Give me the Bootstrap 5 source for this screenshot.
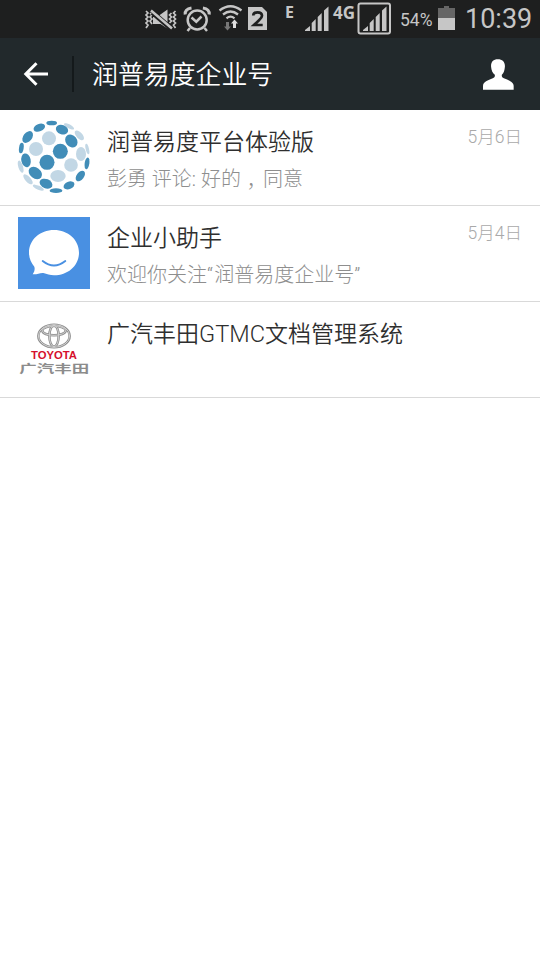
<!DOCTYPE html>
<html lang="zh-CN">
<head>
<meta charset="utf-8">
<meta name="viewport" content="width=device-width, initial-scale=1">
<title>润普易度企业号</title>
<link rel="stylesheet" href="https://cdn.jsdelivr.net/npm/bootstrap@5.3.0/dist/css/bootstrap.min.css">
<style>
body{font-family:Roboto,"Noto Sans CJK SC",sans-serif;background:#fff;height:960px;overflow:hidden}
svg{display:block;flex:none;overflow:visible}
.status{height:38px;background:#1e1f1f;color:#c6c6c6;padding-left:145px}
.status span{flex:none;white-space:nowrap;line-height:38px}
.s-alarm{margin-left:6px}.s-wifi{margin-left:8px}.s-sim{margin-left:4px}
.s-edge{width:20px;margin-left:17px;font:700 16px "Open Sans",sans-serif}
.status .s-edge,.status .s-lte{line-height:25px;height:38px}
.s-lte{width:24px;margin-left:4px;font:700 17px "Open Sans",sans-serif}
.s-pct{width:38px;margin-left:9px;font-size:17.5px;padding-top:1px}
.s-clock{margin-left:10px;font-size:27px}
.topbar{height:72px;background:#22292c;color:#fff;padding:0 26px 0 24px}
.topbar .rule{width:2px;height:36px;background:#14191b;margin-left:24px}
.topbar h1{font-size:25.9px;font-weight:350;line-height:72px;margin-left:18px;padding-top:2px}
.chat{height:96px;padding:11px 18px 0 18px;border-bottom:1px solid #d9d9d9}
.chat-body{padding-left:17px}
.chat-name{font-size:23px;line-height:30px;color:#2f2f2f;margin-top:7px;font-weight:350}
.latin{font-size:23.6px;line-height:1}
.chat-text{font-size:20px;line-height:28px;color:#8e8e8e;margin-top:7px;font-weight:300}
.chat-date{font-size:17.5px;line-height:24px;color:#a9a9a9;margin-top:4px;font-weight:300}
.comma{display:inline-block;width:22px;height:20px;line-height:20px;margin-bottom:-4px;vertical-align:-8px;font-family:"Noto Sans CJK TC",sans-serif}
.quote{letter-spacing:1.3px}
.brand-en{font:700 33px "Liberation Sans",Arial,sans-serif;fill:#d5112d}
.brand-cn{font:700 34px "Noto Sans CJK SC",sans-serif;fill:#8c8c8c}
</style>
<script src="https://cdn.jsdelivr.net/npm/bootstrap@5.3.0/dist/js/bootstrap.bundle.min.js"></script>
</head>
<body>
<div class="status d-flex">
  <svg width="33" height="38" viewBox="145 0 33 38" fill="none" stroke="#c6c6c6" stroke-width="1.700"><path d="M146 11l2 2-2 2 2 2-2 2 2 2-2 2 2 2-2 3M175.500 11l-2 2 2 2-2 2 2 2-2 2 2 2-2 2 2 3M150 13l2 2-2 2 2 2-2 2 2 3M171.500 13l-2 2 2 2-2 2 2 2-2 2"/><path d="M159 15.500l8.500-6v14zM153 17h3l11.500 9v2.500l-7-4.500h-7.500z" fill="#c6c6c6" stroke="none"/><path d="M152.500 12.500l18 15.500" stroke="#1e1f1f" stroke-width="5"/><path d="M151 10.500l21 18" stroke-width="2.500"/></svg>
  <svg class="s-alarm" width="27" height="38" viewBox="184 0 27 38" fill="none" stroke="#c6c6c6" stroke-width="2.500"><circle cx="197.200" cy="20" r="9.500"/><path d="M191.500 17.500l4.800 4.200 5.200-5.200M190 28l-2.500 3M204.500 28l2.500 3"/><path d="M185.200 14.500q-.5-5.500 6.300-6.500M209.200 14.500q.5-5.500-6.300-6.500" stroke-width="3"/></svg>
  <svg class="s-wifi" width="25" height="38" viewBox="219 0 25 38" fill="none" stroke="#c6c6c6" stroke-width="2.300"><path d="M219.500 10.500q11-8.500 22 0M223 14.500q7.500-6 15 0M226.500 18.300q4-3.300 8 0"/><path d="M234.500 19.500l3.500 4h-2v4.500h-3v-4.500h-2z" fill="#ddd" stroke="none"/><path d="M226 22h3v4.500h2l-3.500 4-3.500-4h2z" fill="#777" stroke="none"/></svg>
  <svg class="s-sim" width="20" height="38" viewBox="248 0 20 38"><path d="M248 7h14l5 5v18h-19z" fill="#c6c6c6"/><path d="M253.300 15.500q0-3.200 4.200-3.200 4.500 0 4.500 3.400 0 2-3 4.600l-5 4.700h8.700" fill="none" stroke="#1e1f1f" stroke-width="2.700"/></svg>
  <span class="s-edge">E</span>
  <svg width="24" height="38" viewBox="305 0 24 38" fill="#c6c6c6"><path d="M305 31v-1l5-4v5zM311.700 31v-8l4-4v12zM317.700 31V17l4-4v18zM324 31V10.500l4.500-4V31z"/></svg>
  <span class="s-lte">4G</span>
  <svg width="34" height="38" viewBox="357 0 34 38" fill="#c6c6c6"><rect x="358.500" y="3.500" width="31.500" height="30" rx="2" fill="none" stroke="#c6c6c6" stroke-width="2"/><path d="M363 31v-1l5-4v5zM369.700 31v-8l4-4v12zM375.700 31V17l4-4v18zM382 31V10.500l4.500-4V31z"/></svg>
  <span class="s-pct">54%</span>
  <svg width="17" height="38" viewBox="438 0 17 38"><path d="M444 6h5v2h6v11h-17V8h6z" fill="#666"/><path d="M438 18h17v12h-17z" fill="#c6c6c6"/></svg>
  <span class="s-clock">10:39</span>
</div>
<header class="topbar d-flex align-items-center">
  <svg width="24" height="24" viewBox="24 62.500 24 24" fill="none" stroke="#fff" stroke-width="3"><path d="M48 74.500H26M36.500 63.700L25.800 74.500l10.700 10.800"/></svg>
  <div class="rule"></div>
  <h1 class="mb-0">润普易度企业号</h1>
  <svg class="ms-auto" width="31" height="31" viewBox="69 68 92 92" fill="#fff"><path d="M113 69c-14 0-21 9-20 22 1 11 4 18 11 24 1 6-1 8-6 10-14 6-29 11-29 23v11h91v-11c0-12-15-17-29-23-5-2-7-4-6-10 6-6 8-13 9-24 1-13-7-22-21-22z"/></svg>
</header>
<main>
  <div class="chat d-flex">
    <svg width="72" height="72" viewBox="24 27 216 216"><g fill="#c2d7e5"><circle cx="117" cy="79" r="21"/><circle cx="78" cy="111" r="21"/><circle cx="183" cy="159" r="20.500"/><ellipse cx="144" cy="192" rx="23" ry="18"/><ellipse cx="213" cy="126" rx="15" ry="21"/><ellipse cx="208" cy="70" rx="9" ry="18" transform="rotate(-43 208 70)"/><ellipse cx="177" cy="43" rx="17" ry="6" transform="rotate(28 177 43)"/><ellipse cx="232" cy="111" rx="5" ry="16" transform="rotate(-13 232 111)"/><ellipse cx="32" cy="164" rx="7" ry="19" transform="rotate(-18 32 164)"/><ellipse cx="54" cy="202" rx="8" ry="19" transform="rotate(-43 54 202)"/><ellipse cx="85" cy="227" rx="18" ry="6" transform="rotate(24 85 227)"/></g><g fill="#418db8"><circle cx="151" cy="118" r="22.500"/><circle cx="111" cy="151" r="22.500"/><ellipse cx="184" cy="87" rx="17" ry="21" transform="rotate(-38 184 87)"/><ellipse cx="156" cy="53" rx="19" ry="14" transform="rotate(20 156 53)"/><ellipse cx="125" cy="33" rx="16" ry="7"/><ellipse cx="88" cy="47" rx="18" ry="11" transform="rotate(-22 88 47)"/><ellipse cx="53" cy="75" rx="13" ry="20" transform="rotate(38 53 75)"/><ellipse cx="34" cy="108" rx="7" ry="16" transform="rotate(8 34 108)"/><ellipse cx="48" cy="145" rx="14" ry="21" transform="rotate(-12 48 145)"/><ellipse cx="76" cy="183" rx="22" ry="16" transform="rotate(37 76 183)"/><ellipse cx="108" cy="215" rx="20" ry="14" transform="rotate(23 108 215)"/><ellipse cx="138" cy="236" rx="19" ry="7"/><ellipse cx="177" cy="220" rx="17" ry="11" transform="rotate(-23 177 220)"/><ellipse cx="211" cy="192" rx="11" ry="18" transform="rotate(38 211 192)"/><ellipse cx="231" cy="154" rx="7" ry="18" transform="rotate(8 231 154)"/></g></svg>
    <div class="flex-grow-1 chat-body"><div class="chat-name">润普易度平台体验版</div><div class="chat-text">彭勇 评论: 好的<span class="comma" lang="zh-TW">，</span>同意</div></div>
    <div class="chat-date">5月6日</div>
  </div>
  <div class="chat d-flex">
    <svg width="72" height="72" viewBox="24 27 216 216"><path fill="#4990e2" d="M24 27h216v216H24z"/><path fill="#fff" d="M132 66c42 0 75 29 75 68s-33 68-75 68c-12 0-21-5-32-7-11-1-18 5-32 4 6-8 7-16 5-23-10-12-16-25-16-42 0-39 33-68 75-68z"/><path d="M98 159q34 27 68 0" fill="none" stroke="#4990e2" stroke-width="5.500" stroke-linecap="round"/></svg>
    <div class="flex-grow-1 chat-body"><div class="chat-name">企业小助手</div><div class="chat-text">欢迎你关注<span class="quote">“</span>润普易度企业号<span class="quote">”</span></div></div>
    <div class="chat-date">5月4日</div>
  </div>
  <div class="chat d-flex">
    <svg width="72" height="72" viewBox="24 9 216 216"><g fill="none" stroke="#8e8e8e" stroke-width="7.500"><ellipse cx="132" cy="78" rx="47" ry="34"/><ellipse cx="132" cy="62" rx="35" ry="14"/><ellipse cx="132" cy="78" rx="14" ry="32"/></g><g fill="none" stroke="#d0d0d0" stroke-width="3"><ellipse cx="132" cy="78" rx="47" ry="34"/><ellipse cx="132" cy="62" rx="35" ry="14"/><ellipse cx="132" cy="78" rx="14" ry="32"/></g><text class="brand-en" x="63" y="146" textLength="138" lengthAdjust="spacingAndGlyphs">TOYOTA</text><text class="brand-cn" x="28" y="190" textLength="210" lengthAdjust="spacingAndGlyphs">广汽丰田</text></svg>
    <div class="flex-grow-1 chat-body"><div class="chat-name">广汽丰田<span class="latin">GTMC</span>文档管理系统</div></div>
  </div>
</main>
</body>
</html>
